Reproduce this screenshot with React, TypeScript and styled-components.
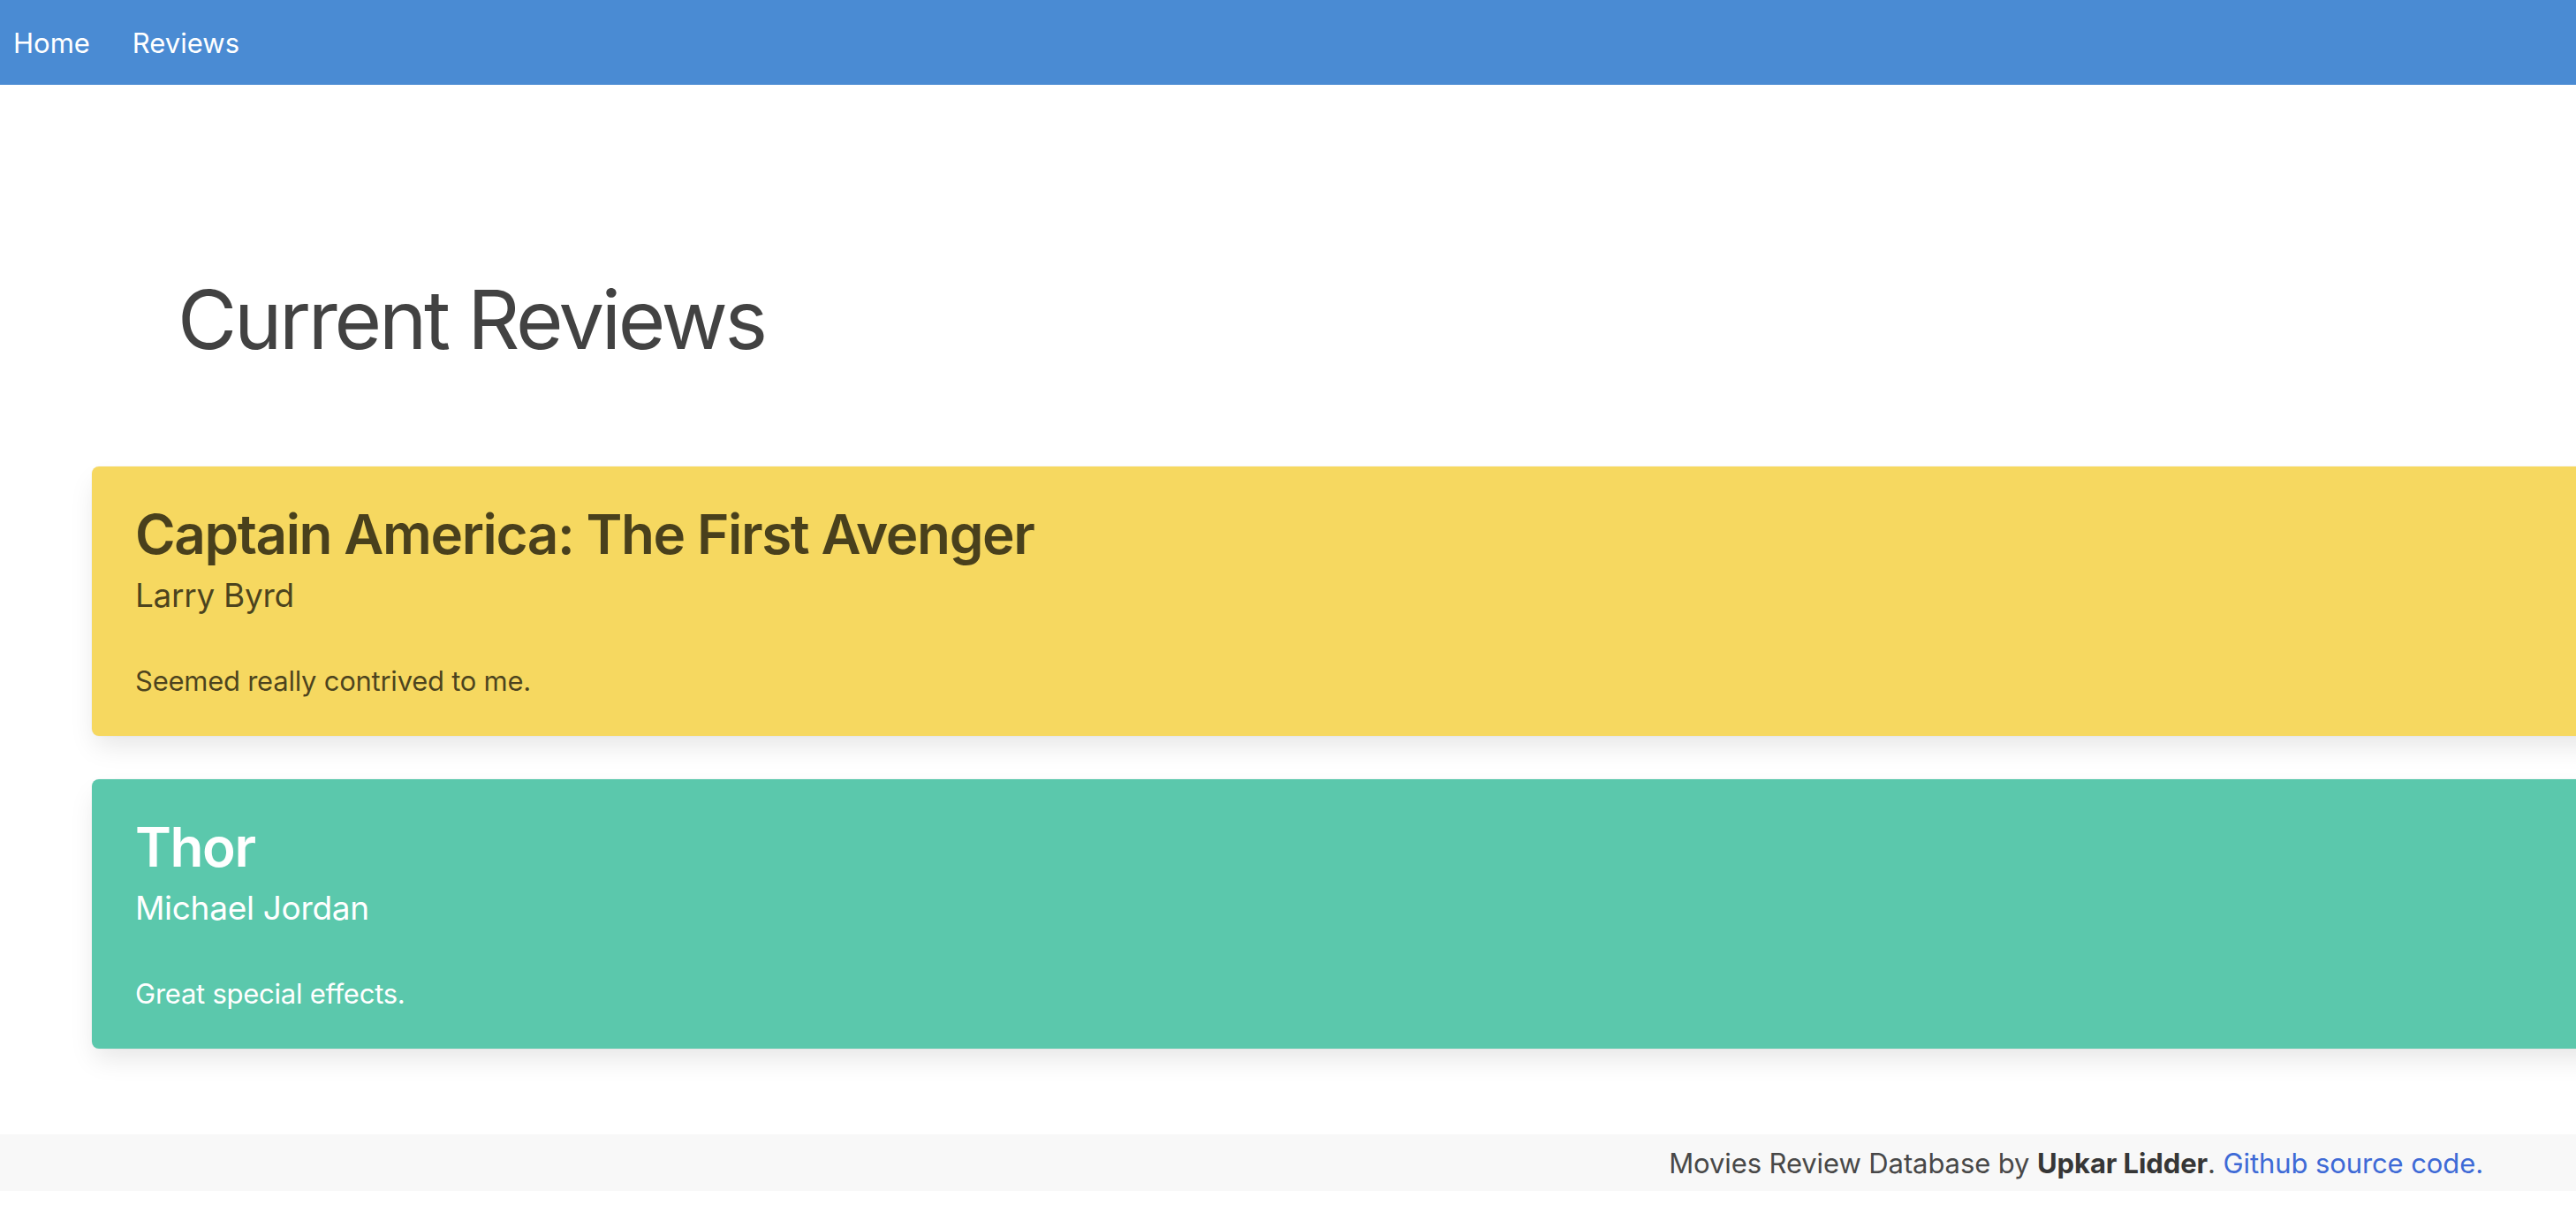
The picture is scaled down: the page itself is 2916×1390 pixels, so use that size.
import React from "react";
import styled, { createGlobalStyle } from "styled-components";

const GlobalStyle = createGlobalStyle`
  html, body {
    margin: 0;
    padding: 0;
    background: #ffffff;
    overflow-x: hidden;
  }
  body {
    font-family: Inter, "Noto Sans", "Liberation Sans", sans-serif;
    color: #4a4a4a;
  }
  * { box-sizing: border-box; }
`;

const Page = styled.div`
  display: flex;
  flex-direction: column;
  min-height: 1390px;
  width: 2916px;
  overflow: hidden;
`;

const NavBar = styled.nav`
  display: flex;
  align-items: center;
  gap: 48px;
  height: 96px;
  padding-left: 15px;
  background: #4a8bd3;
`;

const NavLink = styled.a`
  color: #ffffff;
  font-size: 31px;
  font-weight: 400;
  text-decoration: none;
  line-height: 1;
`;

const Main = styled.main`
  display: flex;
  flex-direction: column;
  padding: 212px 0 97px 104px;
`;

const PageTitle = styled.h1`
  margin: 0 0 112px 97px;
  font-size: 92px;
  font-weight: 400;
  line-height: 108px;
  color: #424242;
  letter-spacing: -3.3px;
`;

const CardList = styled.div`
  display: flex;
  flex-direction: column;
  gap: 49px;
  margin-right: -200px;
`;

const Card = styled.article<{ $bg: string; $fg: string }>`
  display: flex;
  flex-direction: column;
  height: 305px;
  padding: 41px 0 0 49px;
  border-radius: 8px;
  background: ${(p) => p.$bg};
  color: ${(p) => p.$fg};
  box-shadow: 0 15px 30px -4px rgba(10, 10, 10, 0.1), 0 0 0 1px rgba(10, 10, 10, 0.02);
`;

const CardTitle = styled.h2`
  margin: 0;
  font-size: 62px;
  font-weight: 600;
  line-height: 71px;
  letter-spacing: -1.4px;
`;

const CardAuthor = styled.p`
  margin: 11px 0 0;
  font-size: 37px;
  font-weight: 400;
  line-height: 46px;
  letter-spacing: -0.3px;
`;

const CardBody = styled.p`
  margin: 49px 0 0;
  font-size: 31px;
  font-weight: 400;
  line-height: 49px;
  letter-spacing: -0.25px;
`;

const Footer = styled.footer`
  display: flex;
  align-items: center;
  justify-content: flex-end;
  height: 64px;
  padding-right: 105px;
  background: #f8f8f8;
  font-size: 31px;
  letter-spacing: -0.1px;
  color: #484848;
`;

const Strong = styled.strong`
  font-weight: 700;
  color: #363636;
`;

const FooterLink = styled.a`
  color: #3e6ad6;
  text-decoration: none;
`;

const reviews = [
  {
    title: "Captain America: The First Avenger",
    author: "Larry Byrd",
    body: "Seemed really contrived to me.",
    bg: "#f6d860",
    fg: "rgba(0, 0, 0, 0.7)",
  },
  {
    title: "Thor",
    author: "Michael Jordan",
    body: "Great special effects.",
    bg: "#5bc8ac",
    fg: "#ffffff",
  },
];

export default function App() {
  return (
    <>
      <GlobalStyle />
      <Page>
        <NavBar>
          <NavLink href="#">Home</NavLink>
          <NavLink href="#">Reviews</NavLink>
        </NavBar>
        <Main>
          <PageTitle>Current Reviews</PageTitle>
          <CardList>
            {reviews.map((r) => (
              <Card key={r.title} $bg={r.bg} $fg={r.fg}>
                <CardTitle>{r.title}</CardTitle>
                <CardAuthor>{r.author}</CardAuthor>
                <CardBody>{r.body}</CardBody>
              </Card>
            ))}
          </CardList>
        </Main>
        <Footer>
          <span>
            Movies Review Database by <Strong>Upkar Lidder</Strong>.{" "}
            <FooterLink href="#">Github source code.</FooterLink>
          </span>
        </Footer>
      </Page>
    </>
  );
}
